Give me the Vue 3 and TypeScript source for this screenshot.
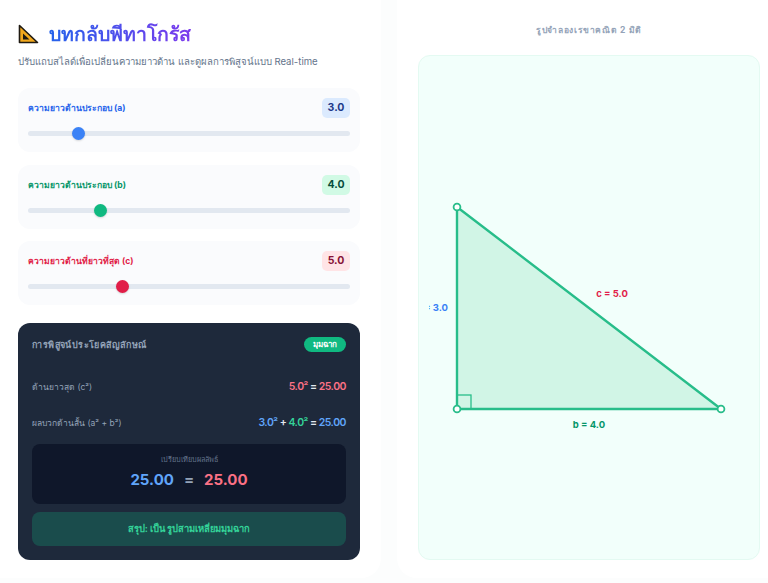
<script setup lang="ts">
import { computed, ref } from 'vue';

const a = ref(3);
const b = ref(4);
const c = ref(5);

const sliders = computed(() => [
  { key: 'a', label: 'ความยาวด้านประกอบ (a)', model: a, tone: 'blue' },
  { key: 'b', label: 'ความยาวด้านประกอบ (b)', model: b, tone: 'green' },
  { key: 'c', label: 'ความยาวด้านที่ยาวที่สุด (c)', model: c, tone: 'red' }
]);

const sq = (n: number) => n * n;
const sumSquares = computed(() => sq(a.value) + sq(b.value));
const isRight = computed(() => Math.abs(sumSquares.value - sq(c.value)) < 0.01);

// triangle origin inside the svg, right angle corner
const ox = 28;
const oy = 343;
const ax = computed(() => ox + b.value * 66);
const ay = computed(() => oy - a.value * 67.33);
const points = computed(() => `${ox},${ay.value} ${ox},${oy} ${ax.value},${oy}`);
</script>

<template>
  <div class="page">
    <section class="panel left">
      <h1 class="title-row">
        <svg class="ruler" width="21" height="20" viewBox="0 0 21 20">
          <path d="M1.5 1.5 L1.5 18.5 L19.5 18.5 Z" fill="#f2a81d" stroke="#1f1a12" stroke-width="1.6" stroke-linejoin="round" />
          <path d="M5 9.5 L5 15.5 L11.5 15.5 Z" fill="#1f1a12" />
        </svg>
        <span class="title">บทกลับพีทาโกรัส</span>
      </h1>
      <p class="sub">ปรับแถบสไลด์เพื่อเปลี่ยนความยาวด้าน และดูผลการพิสูจน์แบบ Real-time</p>

      <div v-for="s in sliders" :key="s.key" class="slider-card" :class="s.tone">
        <div class="slider-head">
          <label class="slider-label">{{ s.label }}</label>
          <span class="chip">{{ s.model.value.toFixed(1) }}</span>
        </div>
        <input v-model.number="s.model.value" class="range" type="range" min="1" max="15" step="0.1" />
      </div>

      <div class="proof">
        <div class="proof-head">
          <span class="proof-title">การพิสูจน์ประโยคสัญลักษณ์</span>
          <span class="badge">{{ isRight ? 'มุมฉาก' : 'ไม่ใช่' }}</span>
        </div>
        <div class="proof-row">
          <span>ด้านยาวสุด (c²)</span>
          <b><i class="pink">{{ c.toFixed(1) }}²</i> = <i class="pink">{{ sq(c).toFixed(2) }}</i></b>
        </div>
        <div class="proof-row">
          <span>ผลบวกด้านสั้น (a² + b²)</span>
          <b><i class="sky">{{ a.toFixed(1) }}²</i> + <i class="mint">{{ b.toFixed(1) }}²</i> = <i class="sky">{{ sumSquares.toFixed(2) }}</i></b>
        </div>
        <div class="compare">
          <div class="compare-label">เปรียบเทียบผลลัพธ์</div>
          <div class="compare-values">
            <span class="sky">{{ sumSquares.toFixed(2) }}</span>
            <span class="eq">{{ isRight ? '=' : '≠' }}</span>
            <span class="pink">{{ sq(c).toFixed(2) }}</span>
          </div>
        </div>
        <div class="verdict">สรุป: เป็น รูปสามเหลี่ยมมุมฉาก</div>
      </div>
    </section>

    <section class="panel right">
      <div class="fig-title">รูปจำลองเรขาคณิต 2 มิติ</div>
      <div class="canvas">
        <svg class="tri" width="322" height="485">
          <polygon :points="points" fill="#d1f5e6" />
          <line :x1="ox" :y1="ay" :x2="ox" :y2="oy" class="edge" />
          <line :x1="ox" :y1="oy" :x2="ax" :y2="oy" class="edge" />
          <line :x1="ox" :y1="ay" :x2="ax" :y2="oy" class="edge" />
          <rect :x="ox" :y="oy - 14" width="14" height="14" fill="none" stroke="#28bd8a" stroke-width="1.3" />
          <circle :cx="ox" :cy="ay" r="3.4" class="dot" />
          <circle :cx="ox" :cy="oy" r="3.4" class="dot" />
          <circle :cx="ax" :cy="oy" r="3.4" class="dot" />
          <text :x="ox - 9" :y="(ay + oy) / 2 + 3" text-anchor="end" class="lbl" fill="#3b82f6">a = {{ a.toFixed(1) }}</text>
          <text :x="(ox + ax) / 2" :y="oy + 19" text-anchor="middle" class="lbl" fill="#059669">b = {{ b.toFixed(1) }}</text>
          <text :x="(ox + ax) / 2 + 23" :y="(ay + oy) / 2 - 11" text-anchor="middle" class="lbl" fill="#e11d48">c = {{ c.toFixed(1) }}</text>
        </svg>
      </div>
    </section>
  </div>
</template>

<style>
html, body {
  margin: 0;
  background: #fcfdfd;
}
</style>

<style scoped>
.page {
  display: grid;
  grid-template-columns: 381px 371px;
  gap: 16px;
  height: 583px;
  box-sizing: border-box;
  padding-bottom: 5px;
  overflow: hidden;
  font-family: Inter, "Noto Sans", "Open Sans", sans-serif;
  color: #334155;
}

.panel {
  background: #fff;
  box-sizing: border-box;
}

.left {
  padding: 21px 21px 18px 18px;
  border-radius: 0 0 20px 0;
}

.right {
  padding: 24px 8px 18px 21px;
  border-radius: 0 0 0 20px;
  display: flex;
  flex-direction: column;
}

.title-row {
  display: flex;
  align-items: center;
  gap: 10px;
  margin: 0;
  height: 26px;
}

.title {
  font-size: 19.5px;
  font-weight: 700;
  background: linear-gradient(90deg, #2563eb, #7c3aed);
  -webkit-background-clip: text;
  background-clip: text;
  color: transparent;
}

.sub {
  margin: 6px 0 18px;
  font-size: 9.6px;
  line-height: 17px;
  color: #64748b;
  white-space: nowrap;
}

.slider-card {
  height: 64px;
  box-sizing: border-box;
  padding: 10px 10px 0;
  margin-bottom: 12.5px;
  background: #fafbfd;
  border-radius: 12px;
}

.slider-head {
  display: flex;
  justify-content: space-between;
  align-items: center;
  height: 20px;
}

.slider-label {
  font-size: 8.6px;
  font-weight: 700;
}

.chip {
  width: 28px;
  height: 20px;
  line-height: 20px;
  text-align: center;
  border-radius: 5px;
  font-size: 10.5px;
  font-weight: 700;
}

.blue .slider-label { color: #2563eb; }
.blue .chip { background: #dbeafe; color: #1e3a8a; }
.green .slider-label { color: #059669; }
.green .chip { background: #d1fae5; color: #064e3b; }
.red .slider-label { color: #e11d48; }
.red .chip { background: #ffe4e6; color: #881337; }

.range {
  -webkit-appearance: none;
  appearance: none;
  display: block;
  width: 100%;
  height: 5px;
  margin: 13px 0 0;
  background: #e2e8f0;
  border-radius: 3px;
  outline: none;
}

.range::-webkit-slider-thumb {
  -webkit-appearance: none;
  appearance: none;
  width: 13px;
  height: 13px;
  border-radius: 50%;
  background: #3b82f6;
  box-shadow: 0 1px 2px rgba(0, 0, 0, 0.15);
}

.green .range::-webkit-slider-thumb { background: #10b981; }
.red .range::-webkit-slider-thumb { background: #e11d48; }

.proof {
  margin-top: 17.5px;
  height: 237px;
  box-sizing: border-box;
  padding: 15px 14px 14px;
  background: #1e293b;
  border-radius: 12px;
}

.proof-head {
  display: flex;
  justify-content: space-between;
  align-items: center;
  height: 14px;
  margin-bottom: 17px;
}

.proof-title {
  font-size: 9px;
  font-weight: 700;
  letter-spacing: 0.4px;
  color: #94a3b8;
}

.badge {
  background: #10b981;
  color: #fff;
  font-size: 8px;
  font-weight: 700;
  height: 15px;
  line-height: 15px;
  padding: 0 9px;
  border-radius: 8px;
}

.proof-row {
  display: flex;
  justify-content: space-between;
  align-items: center;
  height: 36px;
  font-size: 8.5px;
  color: #94a3b8;
}

.proof-row b {
  font-size: 10.5px;
  font-weight: 600;
  letter-spacing: -0.5px;
  color: #e2e8f0;
}

.proof-row i {
  font-style: normal;
}

.pink { color: #fb7185; }
.sky { color: #60a5fa; }
.mint { color: #34d399; }

.compare {
  margin-top: 3px;
  height: 60px;
  box-sizing: border-box;
  padding-top: 10px;
  background: #0f172a;
  border-radius: 8px;
  text-align: center;
}

.compare-label {
  font-size: 7.3px;
  line-height: 12px;
  color: #64748b;
}

.compare-values {
  display: flex;
  justify-content: center;
  gap: 10px;
  margin-top: 3px;
  font-size: 15px;
  line-height: 22px;
  font-weight: 700;
}

.eq {
  color: #94a3b8;
}

.verdict {
  margin-top: 8px;
  height: 34px;
  line-height: 34px;
  text-align: center;
  font-size: 9.4px;
  font-weight: 700;
  color: #34d399;
  background: rgba(16, 185, 129, 0.25);
  border-radius: 8px;
}

.fig-title {
  text-align: center;
  font-size: 8.5px;
  font-weight: 700;
  letter-spacing: 0.65px;
  line-height: 12px;
  color: #94a3b8;
  margin-bottom: 19px;
}

.canvas {
  height: 505px;
  box-sizing: border-box;
  padding: 10px;
  background: #f2fffb;
  border: 1px solid #e4faf2;
  border-radius: 12px;
}

.tri {
  display: block;
  overflow: hidden;
}

.edge {
  stroke: #28bd8a;
  stroke-width: 2.4;
  stroke-linecap: round;
}

.dot {
  fill: #fff;
  stroke: #28bd8a;
  stroke-width: 1.8;
}

.lbl {
  font-size: 9.5px;
  font-weight: 700;
}
</style>
